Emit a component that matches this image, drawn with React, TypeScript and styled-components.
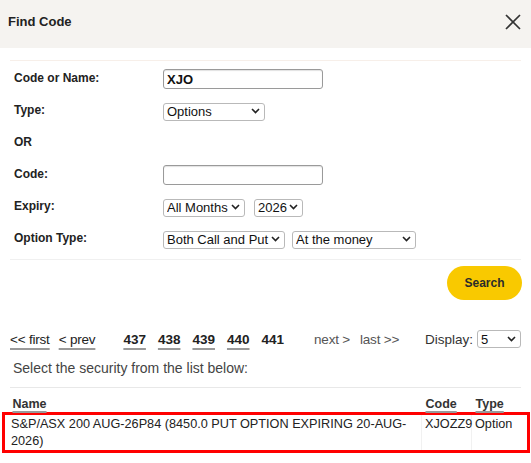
import React, { useState } from 'react';
import styled, { createGlobalStyle } from 'styled-components';

const GlobalStyle = createGlobalStyle`
  html, body {
    margin: 0;
    padding: 0;
    background: #ffffff;
  }
  body {
    font-family: "Liberation Sans", Arial, sans-serif;
    color: #222;
  }
`;

const Dialog = styled.div`
  width: 531px;
  background: #fff;
`;

const Header = styled.div`
  height: 48px;
  background: #f5f3f0;
  display: flex;
  align-items: center;
  justify-content: space-between;
  padding: 0 8px 0 8px;
  box-sizing: border-box;
`;

const Title = styled.h2`
  margin: 0 0 6px 0;
  font-size: 13px;
  font-weight: 700;
  color: #222;
`;

const CloseButton = styled.button`
  border: none;
  background: transparent;
  padding: 0;
  margin: 0 1px 4px 0;
  width: 18px;
  height: 18px;
  display: flex;
  align-items: center;
  justify-content: center;
  cursor: pointer;
`;

const Body = styled.div`
  padding: 12px 10px 0 10px;
`;

const Divider = styled.div<{ $tone?: string; $mt?: number }>`
  height: 1px;
  background: ${p => p.$tone || '#ececec'};
  margin-top: ${p => p.$mt || 0}px;
`;

const Form = styled.div`
  display: grid;
  grid-template-columns: 149px 1fr;
  grid-auto-rows: 32px;
  align-items: center;
  margin-top: 2px;
  padding-left: 4px;
`;

const Label = styled.label`
  font-size: 12px;
  font-weight: 700;
  color: #222;
  margin-top: -3px;
`;

const ControlRow = styled.div<{ $gap?: number }>`
  display: flex;
  align-items: center;
  gap: ${p => p.$gap ?? 9}px;
`;

const TextInput = styled.input<{ $bold?: boolean }>`
  width: 160px;
  height: 20px;
  box-sizing: border-box;
  border: 1px solid #9a9a9a;
  border-radius: 3px;
  padding: 0 3px;
  font-family: "Liberation Sans", Arial, sans-serif;
  font-size: 13px;
  font-weight: ${p => (p.$bold ? 700 : 400)};
  color: #111;
  outline: none;
  box-shadow: inset 0 1px 1px rgba(0, 0, 0, 0.12);
`;

const SelectBox = styled.div<{ $w: number }>`
  position: relative;
  width: ${p => p.$w}px;
  height: 18px;
  display: inline-block;
`;

const NativeSelect = styled.select`
  appearance: none;
  -webkit-appearance: none;
  width: 100%;
  height: 100%;
  box-sizing: border-box;
  border: 1px solid #b9b9b9;
  border-radius: 3px;
  background: #fff;
  padding: 0 14px 0 3px;
  font-family: "Liberation Sans", Arial, sans-serif;
  font-size: 13px;
  color: #111;
  outline: none;
`;

const Chevron = styled.svg`
  position: absolute;
  right: 5px;
  top: 6px;
  pointer-events: none;
`;

const Actions = styled.div`
  display: flex;
  justify-content: flex-end;
  margin-top: 6px;
`;

const SearchButton = styled.button`
  width: 75px;
  height: 34px;
  border: none;
  border-radius: 17px;
  background: #f9c900;
  color: #2b2b2b;
  font-family: "Liberation Sans", Arial, sans-serif;
  font-size: 12px;
  font-weight: 700;
  cursor: pointer;
  margin-right: -1px;
`;

const Pager = styled.div`
  display: flex;
  align-items: center;
  height: 20px;
  margin-top: 29px;
  font-size: 13.5px;
  color: #333;
`;

const PagerGroup = styled.div<{ $gap: number; $ml?: number }>`
  display: flex;
  align-items: center;
  gap: ${p => p.$gap}px;
  margin-left: ${p => p.$ml || 0}px;
`;

const PagerLink = styled.a<{ $strong?: boolean; $plain?: boolean }>`
  color: ${p => (p.$plain ? '#555' : '#222')};
  font-weight: ${p => (p.$strong ? 600 : 400)};
  letter-spacing: ${p => (p.$strong ? 0 : -0.2)}px;
  text-decoration: ${p => (p.$plain ? 'none' : 'underline')};
  text-decoration-color: #9a9a9a;
  text-decoration-thickness: 1.5px;
  text-underline-offset: 4px;
  cursor: pointer;
`;

const CurrentPage = styled.span`
  font-weight: 700;
  color: #222;
`;

const DisplayControl = styled.div`
  margin-left: auto;
  display: flex;
  align-items: center;
  gap: 4px;
  color: #333;
`;

const Hint = styled.p`
  margin: 10px 0 0 3px;
  font-size: 14px;
  line-height: 18px;
  color: #444;
`;

const ResultTable = styled.table`
  border-collapse: collapse;
  width: 525px;
  margin: 8px 0 0 -8px;
  font-size: 12.7px;
  table-layout: fixed;
`;

const HeadCell = styled.th<{ $w: number; $pad: number }>`
  box-sizing: border-box;
  width: ${p => p.$w}px;
  text-align: left;
  padding: 0 0 0 ${p => p.$pad}px;
  height: 16px;
  line-height: 16px;
  vertical-align: top;
`;

const HeadLabel = styled.span`
  font-size: 12.5px;
  font-weight: 700;
  color: #333;
  text-decoration: underline;
  text-decoration-color: #9a9a9a;
  text-decoration-thickness: 2px;
  text-underline-offset: 3px;
`;

const SelectedRow = styled.tr`
  border: 3px solid #ff0000;
`;

const Cell = styled.td<{ $pad: number; $first?: boolean }>`
  box-sizing: border-box;
  padding: 1px 0 0 ${p => p.$pad}px;
  line-height: 17px;
  height: 33px;
  vertical-align: top;
  color: #222;
  border-left: ${p => (p.$first ? 'none' : '1px solid #f1f1f1')};
`;

const ChevronIcon = () => (
  <Chevron width="9" height="6" viewBox="0 0 9 6">
    <path d="M1 1l3.5 3.5L8 1" fill="none" stroke="#222" strokeWidth="1.6" />
  </Chevron>
);

const Dropdown: React.FC<{ width: number; value: string; options: string[] }> = ({ width, value, options }) => {
  const [current, setCurrent] = useState(value);
  return (
    <SelectBox $w={width}>
      <NativeSelect value={current} onChange={e => setCurrent(e.target.value)}>
        {options.map(o => (
          <option key={o} value={o}>
            {o}
          </option>
        ))}
      </NativeSelect>
      <ChevronIcon />
    </SelectBox>
  );
};

const App: React.FC = () => {
  const [query, setQuery] = useState('XJO');
  const [code, setCode] = useState('');

  return (
    <Dialog>
      <GlobalStyle />
      <Header>
        <Title>Find Code</Title>
        <CloseButton aria-label="Close">
          <svg width="16" height="16" viewBox="0 0 16 16">
            <path d="M1 1L15 15M15 1L1 15" stroke="#333" strokeWidth="1.7" />
          </svg>
        </CloseButton>
      </Header>

      <Body>
        <Divider $tone="#f7efe9" />
        <Form>
          <Label>Code or Name:</Label>
          <ControlRow>
            <TextInput $bold value={query} onChange={e => setQuery(e.target.value)} />
          </ControlRow>

          <Label>Type:</Label>
          <ControlRow>
            <Dropdown width={102} value="Options" options={['Options', 'Equities', 'Warrants']} />
          </ControlRow>

          <Label>OR</Label>
          <div />

          <Label>Code:</Label>
          <ControlRow>
            <TextInput value={code} onChange={e => setCode(e.target.value)} />
          </ControlRow>

          <Label>Expiry:</Label>
          <ControlRow $gap={9}>
            <Dropdown width={82} value="All Months" options={['All Months', 'JAN', 'FEB']} />
            <Dropdown width={49} value="2026" options={['2025', '2026', '2027']} />
          </ControlRow>

          <Label>Option Type:</Label>
          <ControlRow $gap={7}>
            <Dropdown width={122} value="Both Call and Put" options={['Both Call and Put', 'Call', 'Put']} />
            <Dropdown width={124} value="At the money" options={['At the money', 'In the money', 'Out of the money']} />
          </ControlRow>
        </Form>
        <Divider $tone="#f0f0f0" $mt={4} />

        <Actions>
          <SearchButton>Search</SearchButton>
        </Actions>

        <Pager>
          <PagerGroup $gap={9}>
            <PagerLink>&lt;&lt; first</PagerLink>
            <PagerLink>&lt; prev</PagerLink>
          </PagerGroup>
          <PagerGroup $gap={12} $ml={28}>
            <PagerLink $strong>437</PagerLink>
            <PagerLink $strong>438</PagerLink>
            <PagerLink $strong>439</PagerLink>
            <PagerLink $strong>440</PagerLink>
            <CurrentPage>441</CurrentPage>
          </PagerGroup>
          <PagerGroup $gap={10} $ml={30}>
            <PagerLink $plain>next &gt;</PagerLink>
            <PagerLink $plain>last &gt;&gt;</PagerLink>
          </PagerGroup>
          <DisplayControl>
            Display:
            <Dropdown width={44} value="5" options={['5', '10', '20']} />
          </DisplayControl>
        </Pager>

        <Hint>Select the security from the list below:</Hint>
        <Divider $tone="#e8e8e8" $mt={10} />

        <ResultTable>
          <thead>
            <tr>
              <HeadCell $w={418} $pad={9}>
                <HeadLabel>Name</HeadLabel>
              </HeadCell>
              <HeadCell $w={50} $pad={4}>
                <HeadLabel>Code</HeadLabel>
              </HeadCell>
              <HeadCell $w={57} $pad={4}>
                <HeadLabel>Type</HeadLabel>
              </HeadCell>
            </tr>
          </thead>
          <tbody>
            <SelectedRow>
              <Cell $first $pad={6}>
                S&amp;P/ASX 200 AUG-26P84 (8450.0 PUT OPTION EXPIRING 20-AUG-2026)
              </Cell>
              <Cell $pad={3}>XJOZZ9</Cell>
              <Cell $pad={3}>Option</Cell>
            </SelectedRow>
          </tbody>
        </ResultTable>
      </Body>
    </Dialog>
  );
};

export default App;
